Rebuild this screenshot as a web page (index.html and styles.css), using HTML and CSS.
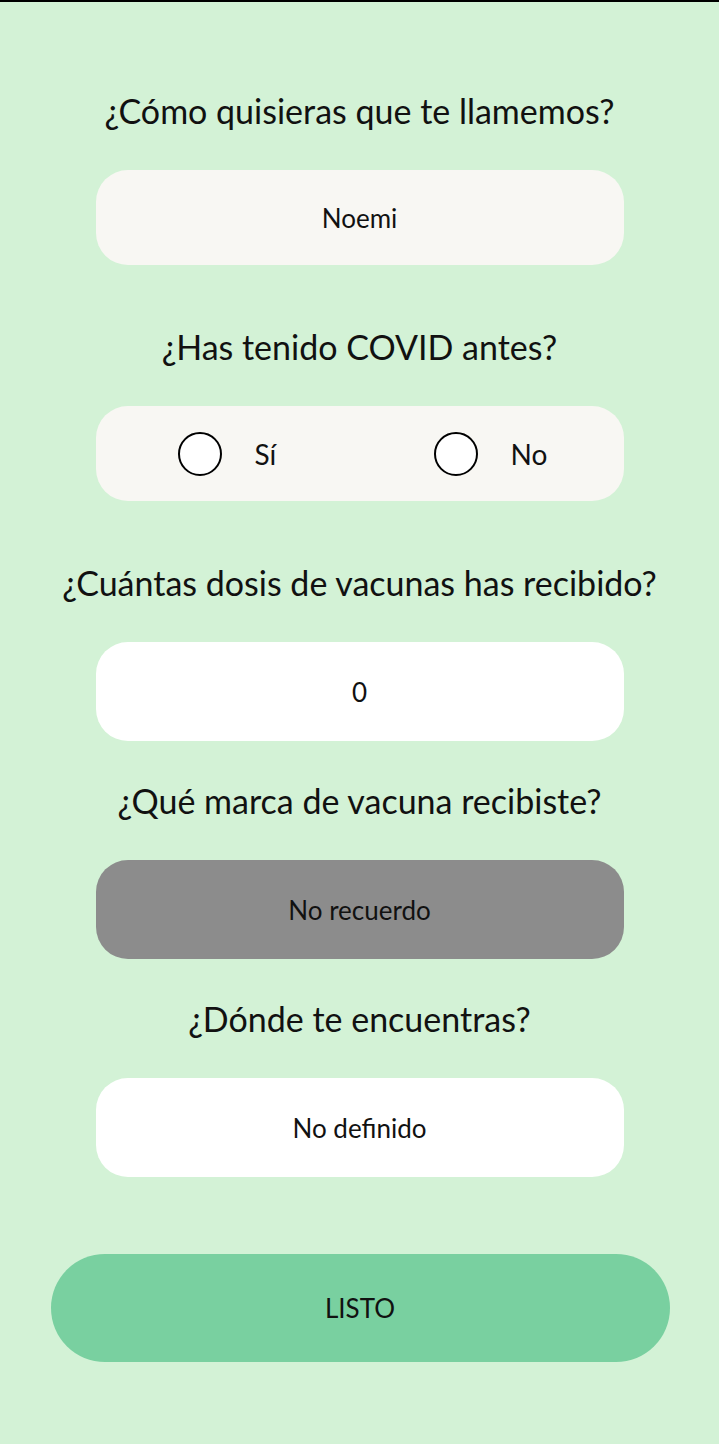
FILE: index.html
```html
<!DOCTYPE html>
<html lang="es">
<head>
<meta charset="utf-8">
<link rel="stylesheet" href="styles.css">
</head>
<body>
<div class="topbar"></div>
<main class="form">
  <section class="field field-first">
    <h2 class="label">¿Cómo quisieras que te llamemos?</h2>
    <div class="box box-cream box-short">Noemi</div>
  </section>
  <section class="field field-wide">
    <h2 class="label">¿Has tenido COVID antes?</h2>
    <div class="box box-cream box-short radios">
      <div class="radio"><span class="circle"></span><span class="radio-text">Sí</span></div>
      <div class="radio"><span class="circle"></span><span class="radio-text">No</span></div>
    </div>
  </section>
  <section class="field field-wide">
    <h2 class="label">¿Cuántas dosis de vacunas has recibido?</h2>
    <div class="box box-white">0</div>
  </section>
  <section class="field">
    <h2 class="label">¿Qué marca de vacuna recibiste?</h2>
    <div class="box box-grey">No recuerdo</div>
  </section>
  <section class="field">
    <h2 class="label">¿Dónde te encuentras?</h2>
    <div class="box box-white">No definido</div>
  </section>
  <div class="actions">
    <button class="done">LISTO</button>
  </div>
</main>
</body>
</html>
```
FILE: styles.css
```css
html, body {
  margin: 0;
  padding: 0;
}
body {
  background: #d3f2d6;
  font-family: Lato, "Noto Sans", sans-serif;
  color: #111;
  min-height: 1444px;
}
.topbar {
  height: 2px;
  background: #000;
}
.form {
  display: flex;
  flex-direction: column;
  align-items: center;
}
.field {
  width: 100%;
  display: flex;
  flex-direction: column;
  align-items: center;
  margin-top: 40px;
}
.field-first {
  margin-top: 89px;
}
.field-wide {
  margin-top: 62px;
}
.label {
  margin: 0;
  font-size: 34px;
  font-weight: 400;
  line-height: 40px;
  height: 40px;
  text-align: center;
  white-space: nowrap;
}
.box {
  margin-top: 39px;
  width: 528px;
  height: 99px;
  border-radius: 32px;
  display: flex;
  align-items: center;
  justify-content: center;
  font-size: 26px;
  box-sizing: border-box;
}
.box-short {
  height: 95px;
}
.box-cream {
  background: #f8f7f3;
}
.box-white {
  background: #ffffff;
}
.box-grey {
  background: #8c8c8c;
}
.radios {
  justify-content: flex-start;
  padding-left: 82px;
}
.radio {
  display: flex;
  align-items: center;
  width: 256px;
  flex-shrink: 0;
}
.circle {
  width: 44px;
  height: 44px;
  box-sizing: border-box;
  border: 2px solid #000;
  border-radius: 50%;
  background: #fff;
}
.radio-text {
  margin-left: 33px;
  font-size: 28px;
}
.actions {
  margin-top: 77px;
  width: 100%;
  display: flex;
  justify-content: center;
}
.done {
  width: 619px;
  height: 108px;
  border: none;
  border-radius: 54px;
  background: #79d0a0;
  font-family: Lato, "Noto Sans", sans-serif;
  font-size: 26px;
  color: #111;
  padding: 0;
  margin-left: 1px;
}
```
